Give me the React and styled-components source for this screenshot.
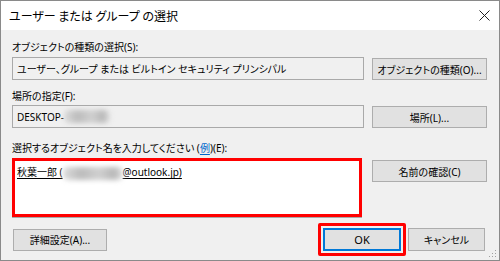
import React from 'react';
import styled, { createGlobalStyle } from 'styled-components';

const GlobalStyle = createGlobalStyle`
  html, body {
    margin: 0;
    padding: 0;
    background: #f0f0f0;
  }
  body {
    font-family: "Noto Sans", "Noto Sans CJK JP", sans-serif;
    font-size: 10px;
    color: #000;
    font-feature-settings: "palt";
  }
`;

const Window = styled.div`
  width: 500px;
  height: 261px;
  box-sizing: border-box;
  border: 1px solid #8a8a8a;
  background: #f0f0f0;
  display: flex;
  flex-direction: column;
  position: relative;
`;

const TitleBar = styled.div`
  height: 29px;
  background: #fff;
  display: flex;
  align-items: center;
  justify-content: space-between;
  padding: 0 9px 0 8px;
`;

const Title = styled.span`
  font-family: "Noto Sans CJK JP", sans-serif;
  font-size: 12px;
  line-height: 16px;
`;

const Body = styled.div`
  flex: 1;
  padding: 9px 12px 0 11px;
  display: flex;
  flex-direction: column;
`;

const Group = styled.div`
  margin-top: ${p => p.$top || 0}px;
  display: flex;
  flex-direction: column;
`;

const Label = styled.div`
  line-height: 16px;
  height: 16px;
  margin-bottom: ${p => p.$gap ?? 2}px;
  white-space: nowrap;
`;

const Row = styled.div`
  display: flex;
  align-items: flex-start;
  gap: 8px;
`;

const ReadOnlyBox = styled.div`
  width: 352px;
  height: 23px;
  box-sizing: border-box;
  border: 1px solid #a9a9a9;
  background: #f0f0f0;
  padding: 0 4px;
  display: flex;
  align-items: center;
  white-space: nowrap;
  overflow: hidden;
`;

const Button = styled.div`
  width: ${p => p.$w || 115}px;
  height: ${p => p.$h || 22}px;
  margin-top: ${p => p.$mt || 0}px;
  box-sizing: border-box;
  border: 1px solid ${p => (p.$focus ? '#0078d7' : '#adadad')};
  box-shadow: ${p => (p.$focus ? 'inset 0 0 0 1px #0078d7' : 'none')};
  background: #e1e1e1;
  display: flex;
  align-items: center;
  justify-content: center;
  white-space: nowrap;
  font-size: ${p => p.$fs || 10}px;
`;

const Highlighted = styled.div`
  border: 3px solid #ff0000;
  border-radius: 2px;
  padding: 2px;
  margin-left: auto;
`;

const InputArea = styled.div`
  width: 350px;
  height: 59px;
  box-sizing: border-box;
  border: 3px solid #ff0000;
  background: #fff;
  padding: 3px 2px;
  line-height: 16px;
  box-shadow: 0 1px 0 #a9a9a9;
`;

const Resolved = styled.span`
  text-decoration: underline;
  text-underline-offset: 2px;
`;

const Blur = styled.span`
  display: inline-block;
  width: ${p => p.$w}px;
  height: 13px;
  vertical-align: middle;
  background: linear-gradient(90deg, #dcdcdc, #bcbcbc 30%, #d0d0d0 60%, #b8b8b8 85%, #e0e0e0);
  filter: blur(2.5px);
  border-radius: 5px;
`;

const Link = styled.span`
  color: #0066cc;
  text-decoration: underline;
  text-underline-offset: 2px;
`;

const Footer = styled.div`
  margin-top: 6px;
  display: flex;
  align-items: center;
  gap: 2px;
  padding-left: 1px;
  padding-right: 2px;
`;

const Grip = styled.svg`
  position: absolute;
  right: 2px;
  bottom: 2px;
`;

function CloseIcon() {
  return (
    <svg width="11" height="11" viewBox="0 0 11 11">
      <path d="M0.5 0.5 L10.5 10.5 M10.5 0.5 L0.5 10.5" stroke="#222" strokeWidth="1" />
    </svg>
  );
}

export default function App() {
  return (
    <>
      <GlobalStyle />
      <Window>
        <TitleBar>
          <Title>ユーザー または グループ の選択</Title>
          <CloseIcon />
        </TitleBar>
        <Body>
          <Group>
            <Label>オブジェクトの種類の選択(S):</Label>
            <Row>
              <ReadOnlyBox>ユーザー、グループ または ビルトイン セキュリティ プリンシパル</ReadOnlyBox>
              <Button $mt={1}>オブジェクトの種類(O)...</Button>
            </Row>
          </Group>
          <Group $top={8}>
            <Label $gap={1}>場所の指定(F):</Label>
            <Row>
              <ReadOnlyBox>
                DESKTOP-<Blur $w={46} />
              </ReadOnlyBox>
              <Button $mt={1}>場所(L)...</Button>
            </Row>
          </Group>
          <Group $top={12}>
            <Label>
              選択するオブジェクト名を入力してください (<Link>例</Link>)(E):
            </Label>
            <Row>
              <InputArea>
                <Resolved>
                  秋葉一郎 (<Blur $w={60} />@outlook.jp)
                </Resolved>
              </InputArea>
              <Button $mt={2} style={{ marginLeft: 2 }}>名前の確認(C)</Button>
            </Row>
          </Group>
          <Footer>
            <Button $w={94}>詳細設定(A)...</Button>
            <Highlighted>
              <Button $w={78} $h={23} $fs={11} $focus>OK</Button>
            </Highlighted>
            <Button $w={77} $h={23}>キャンセル</Button>
          </Footer>
        </Body>
        <Grip width="10" height="10" viewBox="0 0 10 10">
          {[[8, 2], [8, 5], [5, 5], [8, 8], [5, 8], [2, 8]].map(([x, y]) => (
            <rect key={`${x}-${y}`} x={x} y={y} width="1" height="1" fill="#a0a0a0" />
          ))}
        </Grip>
      </Window>
    </>
  );
}
